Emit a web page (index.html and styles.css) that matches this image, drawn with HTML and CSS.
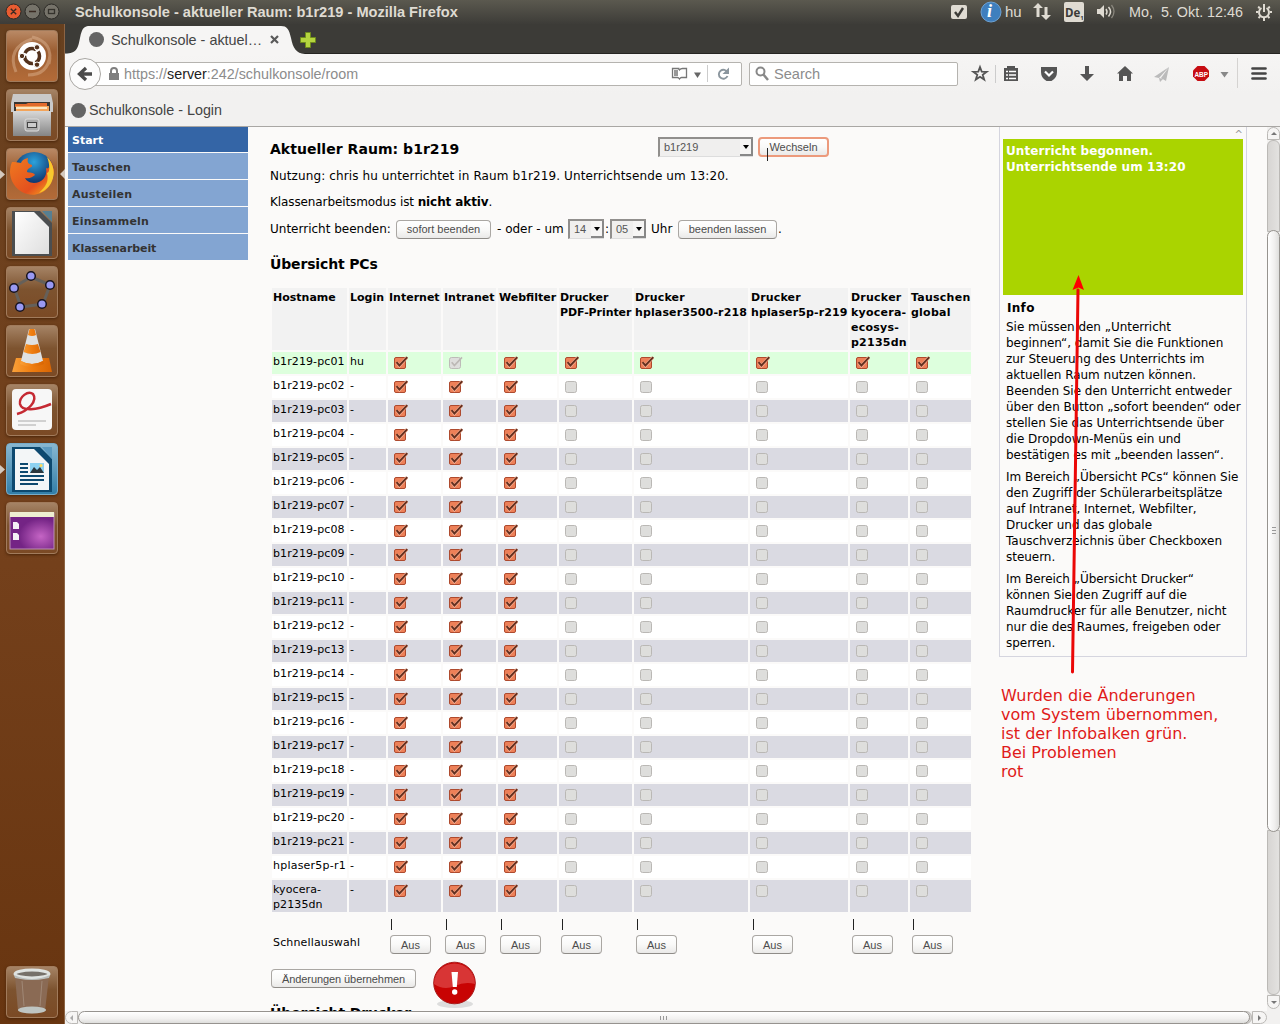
FILE: index.html
```html
<!DOCTYPE html>
<html lang="de">
<head>
<meta charset="utf-8">
<title>Schulkonsole - aktueller Raum: b1r219</title>
<link rel="stylesheet" href="styles.css">
</head>
<body>
<svg class="defs" width="0" height="0">
  <defs>
    <linearGradient id="metal" x2="0" y2="1"><stop stop-color="#d8d8d8"/><stop offset="1" stop-color="#858585"/></linearGradient>
    <linearGradient id="fox" x2="1" y2="1"><stop stop-color="#ef7b20"/><stop offset=".65" stop-color="#e4501e"/><stop offset="1" stop-color="#f8b820"/></linearGradient>
    <radialGradient id="globe" cx=".5" cy=".25"><stop stop-color="#2ca2dc"/><stop offset="1" stop-color="#123a72"/></radialGradient>
    <radialGradient id="desk" cx=".7" cy=".65"><stop stop-color="#c565c5"/><stop offset="1" stop-color="#742485"/></radialGradient>
    <linearGradient id="cone" x2="1"><stop stop-color="#f9a13a"/><stop offset=".5" stop-color="#ef7d10"/><stop offset="1" stop-color="#d76504"/></linearGradient>
    <linearGradient id="paper" x2="1" y2="1"><stop stop-color="#fff"/><stop offset="1" stop-color="#dedede"/></linearGradient>
    <symbol id="on" viewBox="0 0 14 13"><rect x=".5" y="1.5" width="11" height="11" rx="1.5" fill="#ed8058" stroke="#ae4a2e"/><path d="M2.7 6.3 5.4 9.8 13 1.3" fill="none" stroke="#f7b197" stroke-width="3"/><path d="M2.5 6.2 5.4 9.5 13.3 1.2" fill="none" stroke="#65301f" stroke-width="1.9"/></symbol>
    <symbol id="off" viewBox="0 0 14 13"><rect x=".5" y="1.5" width="11" height="11" rx="2" fill="#dededc" stroke="#bab8b5"/></symbol>
    <symbol id="dim" viewBox="0 0 14 13"><rect x=".5" y="1.5" width="11" height="11" rx="2" fill="#dededc" stroke="#bdbbb8"/><path d="M2.7 6.2 5.4 9.5 13 1.3" fill="none" stroke="#bcb8b5" stroke-width="1.7"/></symbol>
  </defs>
</svg>
<header class="panel">
  <svg width="65" height="24"><g stroke="#2c2a26"><circle cx="13.5" cy="11.5" r="7.5" fill="#e85c31"/><circle cx="32.5" cy="11.5" r="7.5" fill="#76736a"/><circle cx="51.5" cy="11.5" r="7.5" fill="#76736a"/></g><path d="m10.8 8.800 5.4 5.4m0-5.4-5.4 5.4M29 11.5h7" stroke="#3a2a22" stroke-width="1.4"/><rect x="48.5" y="9.5" width="6" height="4" fill="none" stroke="#34322c" stroke-width="1.3"/></svg>
  <span class="wintitle">Schulkonsole - aktueller Raum: b1r219 - Mozilla Firefox</span>
  <svg class="tray" width="72" height="24"><rect x="1" y="5" width="16" height="14" rx="2" fill="#dfdbd2"/><path d="m5 12 3 4 5-8" fill="none" stroke="#3c3b37" stroke-width="2.4"/><circle cx="41" cy="12" r="10" fill="#3f7fbe" stroke="#6da2d3"/></svg>
  <i class="infoi">i</i>
  <span class="hu">hu</span>
  <svg class="arrows" width="18" height="18"><path d="M5 0 0 5h3.5v9h3V5H10zM13 17l-5-5h3.5V4h3v8H18z" fill="#dfdbd2"/></svg>
  <span class="kbd">De<small>1</small></span>
  <svg class="vol" width="20" height="16"><path d="M1 5h3l4-4v13l-4-4H1z" fill="#dfdbd2"/><path d="M10 5q2 3 0 5.500M12.500 3q4 4.500 0 9.500" fill="none" stroke="#dfdbd2" stroke-width="1.500"/><path d="M15.500 1q5 6.500 0 13" fill="none" stroke="#89867d" stroke-width="1.300"/></svg>
  <span class="clock">Mo,&nbsp; 5. Okt. 12:46</span>
  <svg class="gear" width="16" height="17" fill="none" stroke="#dfdbd2"><path d="M5.500 4a5 5 0 1 0 5 0" stroke-width="2"/><path d="M8 0v8" stroke-width="2"/><path d="M0 8h2m12 0h2M2 3l2 1m10-1-2 1M2.500 14l1.500-1.500m9.500 1.500L12 12.500M8 14v3" stroke-width="2"/></svg>
</header>
<div class="desktop">
  <nav class="launcher">
    <div class="tile bright"><svg viewBox="0 0 52 52"><path d="M26 7q22 5 17 27M44 25q-2 20-22 20M10 42Q0 18 26 9" stroke="#e0b797" opacity=".45" fill="none" stroke-width="3"/><circle cx="26" cy="26" r="14" fill="#fff"/><circle cx="26" cy="26" r="7.500" fill="none" stroke="#53321d" stroke-width="3.500" stroke-dasharray="13 2.700" stroke-dashoffset="5"/><g fill="#53321d" stroke="#fff"><circle cx="16" cy="26" r="2.700"/><circle cx="31" cy="17.300" r="2.700"/><circle cx="31" cy="34.700" r="2.700"/></g></svg></div>
    <div class="tile"><svg viewBox="0 0 52 52"><path d="M7 5h38l2 9v9H5v-9z" fill="#c9c9c9"/><path d="M8 13h36v14H8z" fill="#393633"/><path d="M9 15h11l2-1h19v4H9z" fill="#e16a2d"/><path d="M10 17h33v8H10z" fill="#f3a45a"/><path d="M10 18h31v2H10z" fill="#fbe6c3"/><path d="M7 22h38v25H7z" fill="url(#metal)"/><rect x="19" y="30" width="14" height="12" rx="2" fill="#aaa" stroke="#ddd"/><rect x="21.500" y="33.500" width="9" height="5" fill="#ccc" stroke="#444"/></svg></div>
    <div class="tile bright"><svg viewBox="0 0 52 52"><circle cx="28" cy="24" r="20" fill="url(#globe)"/><path d="M6 14c-5 12 0 24 10 30 15 8 31-2 32-20 0-7-3-11-6-14 3 7 1 12-2 10 2 9-5 15-12 15-5 0-8-3-9-5 5 1 7-1 10-3-1-3-6-2-8-3 0-5 6-4 5-7-4-1-5-3-4-7-5 1-6 3-7 5l-6-1z" fill="url(#fox)"/><path d="M41 9c6 6 8 14 6 21-2 8-8 13-14 15 7-7 10-11 8-20 3 0 3-9 0-16z" fill="#f8c82e"/></svg></div>
    <div class="tile"><svg viewBox="0 0 52 52"><path d="M6 4h28l12 12v33H6z" fill="#4b4e50"/><path d="M36 4h10v11z" fill="#577f91"/><path d="M9 5h19l15 15v27H9z" fill="url(#paper)"/></svg></div>
    <div class="tile"><svg viewBox="0 0 52 52"><path d="m25 11 19 8-7 19-22 3-7-20z" fill="none" stroke="#65605a" stroke-width="3" stroke-linejoin="round"/><g fill="#9999f2" stroke="#17131e" stroke-width="1.500"><circle cx="25" cy="10" r="4.300"/><circle cx="44" cy="19" r="4.300"/><circle cx="36" cy="38" r="4.300"/><circle cx="14" cy="41" r="4.300"/><circle cx="8" cy="22" r="4.300"/></g></svg></div>
    <div class="tile"><svg viewBox="0 0 52 52"><path d="M10 33h33l3 14H6z" fill="url(#cone)"/><path d="M23 4h6l8 32q-11 6-22 0z" fill="#dfe1e2"/><path d="M23.500 4h5l1.500 6q-4 2-8 0zM20 19q6 2 12 0l2.500 8q-8 4-17 0zM15 36q11 6 22 0l1 3q-12 6-24 0z" fill="url(#cone)"/></svg></div>
    <div class="tile"><svg viewBox="0 0 52 52"><rect x="6" y="5" width="40" height="41" rx="4" fill="#f7f7f7"/><path d="M11 30C22 27 32 17 27 10c-5-4-14 3-13 10 2 8 17 6 31 0" fill="none" stroke="#c52a33" stroke-width="2.500"/><path d="M12 37h28M12 41h18" stroke="#aaa"/></svg></div>
    <div class="tile blue"><svg viewBox="0 0 52 52"><path d="M6 4h28l12 12v33H6z" fill="#0d496f"/><path d="M36 4h10v12z" fill="#5c9ac0"/><path d="M9 6h19l15 15v26H9z" fill="#f3f6f7"/><path d="M14 21h8M14 25h8M14 29h8M14 33h24M14 37h24M14 41h18" stroke="#0d496f" stroke-width="2"/><path d="M24 20h14v10H24z" fill="#8dd2f1"/><path d="m24 30 4-6 3 3 3-3 4 6z" fill="#29373d"/><circle cx="35" cy="22.500" r="1.500" fill="#ffda58"/></svg></div>
    <div class="tile"><svg viewBox="0 0 52 52"><rect x="4" y="11" width="44" height="36" fill="url(#desk)" stroke="#bc91b4"/><path d="M4 10h44v5H4z" fill="#eeeed1"/><path d="M7 20h4l2 2v5H7zM7 31h4l2 2v5H7z" fill="#f5eff5"/></svg></div>
    <div class="tile trash"><svg viewBox="0 0 52 52"><path d="M9 10h34l-4 35q-13 5-27 0z" fill="#8a6a54"/><path d="M16 15l2 25M36 15l-2 25" stroke="#a08876"/><ellipse cx="26" cy="44" rx="14" ry="3.500" fill="#bfc5c2"/><ellipse cx="26" cy="8" rx="17" ry="4" fill="#76716a" stroke="#dfe3e1" stroke-width="3"/><path d="M8 9q18 8 36 0l-1 3q-17 4-34 0z" fill="#b9bdbb"/></svg></div>
    <svg class="marks" width="65" height="500"><path d="M0 146l5 4.500-5 4.500zM0 441l5 4.500-5 4.500zM65 145l-5 5 5 5z" fill="#d4c9bf"/></svg>
  </nav>
  <main class="browser">
    <div class="tabs">
      <svg class="tabshape" width="230" height="30"><path d="M0 30V29.500C12 29.500 13 24 15 14 17 4 19 2 25 2H216C222 2 224 5 226 14 228 24 231 29.500 240 30z" fill="#f6f5f4"/></svg>
      <div class="tab"><i class="dot"></i><span>Schulkonsole - aktuel…</span><svg width="9" height="9"><path d="m1 1 7 7m0-7-7 7" stroke="#5a5a5a" stroke-width="2.200"/></svg></div>
      <svg class="plus" width="16" height="16"><path d="M5.500.5h5v5h5v5h-5v5h-5v-5h-5v-5h5z" fill="#b5d43f" stroke="#6f8b1c"/></svg>
    </div>
    <div class="toolbar">
      <svg class="back" width="32" height="32"><circle cx="16" cy="16" r="15.500" fill="#fcfcfc" stroke="#a8a6a2"/><path d="M23 16H11m6-6-6.500 6 6.500 6" stroke="#4b4b4b" stroke-width="3.300" fill="none"/></svg>
      <div class="url"><svg width="12" height="14"><path d="M1 6h10v7H1z" fill="#7f7f7f"/><path d="M3 7V4q0-3 3-3t3 3v3" fill="none" stroke="#7f7f7f" stroke-width="2"/></svg><span>https://<em>server</em>:242/schulkonsole/room</span>
        <svg class="urlicons" width="70" height="24"><path d="M8.500 6.500h-7v9h5q1 0 2 1.500 1-1.500 2-1.500h5v-9h-4q-2 0-3 1.500-1-1.500-2-1.500M3 9h4M3 11h4M3 13h4" fill="none" stroke="#777" stroke-width="1.300"/><path d="M23 10.500h7L26.500 16z" fill="#666"/><path d="M36.500 3v17" stroke="#ccc"/><path d="M56.500 10.500a4.500 4.500 0 1 0 0 3.500" fill="none" stroke="#8b969e" stroke-width="1.900"/><path d="M58 5.500v6.500h-6.500z" fill="#8b969e"/></svg></div>
      <div class="search"><svg width="14" height="16"><circle cx="5.500" cy="5.500" r="4" fill="none" stroke="#888" stroke-width="2"/><path d="m8 8 5 6" stroke="#888" stroke-width="2.500"/></svg><span>Search</span></div>
      <svg class="tools" width="318" height="40"><g fill="#555"><path d="m18 13 1.700 4.600 5 .2-4 3 1.500 4.800-4.200-2.800-4.200 2.800 1.500-4.800-4-3 5-.2z" fill="none" stroke="#555" stroke-width="1.800"/><path d="M33.500 11v18" stroke="#ccc"/><path d="M42 14h3v-2h8v2h3v13H42z"/><path d="M44 17.500h2m1 0h7m-10 3.500h2m1 0h7m-10 3.500h2m1 0h7" stroke="#fff" stroke-width="1.600"/><path d="M79 13h16v5q0 6-5.500 9h-5q-5.500-3-5.500-9z"/><path d="m83 17.500 4 4 4-4" stroke="#fff" stroke-width="2.200" fill="none"/><path d="M123 12h4v8h5l-7 7-7-7h5z"/><path d="m163 12 8 7.500h-2V27h-4v-5h-4v5h-4v-7.500h-2z"/><path d="m207 13-15 10 5 1zM207 13l-3 14-5-3zM197 24l1 4 3-3z" fill="#bbb"/><path d="M235.500 12h7l4.500 4.500v6l-4.500 4.500h-7l-4.500-4.500v-6z" fill="#c70d12"/><path d="M258.500 18h8l-4 5.500z" fill="#888"/><path d="M275.500 4v30" stroke="#d5d3d1"/><path d="M290.500 14.500h13m-13 5h13m-13 5h13" stroke="#444" stroke-width="2.700" stroke-linecap="round"/></g><text x="232.500" y="22.500" fill="#fff" font-family="Liberation Sans" font-weight="bold" font-size="8" textLength="13.500" lengthAdjust="spacingAndGlyphs">ABP</text></svg>
    </div>
    <div class="bookmarks"><i class="dot"></i><span>Schulkonsole - Login</span></div>
    <div class="view">
      <section class="page">
        <ul class="menu"><li class="active">Start</li><li>Tauschen</li><li>Austeilen</li><li>Einsammeln</li><li class="exam">Klassenarbeit</li></ul>
        <article class="content">
          <div class="headline"><h2>Aktueller Raum: b1r219</h2><span class="select room">b1r219<i></i></span><button class="hot">Wechseln</button></div>
          <p class="usage">Nutzung: chris hu unterrichtet in Raum b1r219. Unterrichtsende um 13:20.</p>
          <p class="mode">Klassenarbeitsmodus ist <b>nicht aktiv</b>.</p>
          <div class="ending"><span class="w121">Unterricht beenden:</span><button class="w95">sofort beenden</button><span class="or">- oder - um</span><span class="select num">14<i></i></span><span class="colon">:</span><span class="select num">05<i></i></span><span class="uhr">Uhr</span><button class="w99">beenden lassen</button><span class="stop">.</span></div>
          <h2 class="pcs">Übersicht PCs</h2>
          <table>
            <colgroup><col class="c1"><col class="c2"><col class="c3"><col class="c3"><col class="c5"><col class="c6"><col class="c7"><col class="c8"><col class="c9"><col class="c10"></colgroup>
            <thead><tr><th>Hostname<th>Login<th>Internet<th>Intranet<th>Webfilter<th>Drucker<br>PDF-Printer<th>Drucker<br>hplaser3500-r218<th>Drucker<br>hplaser5p-r219<th>Drucker<br>kyocera-<br>ecosys-<br>p2135dn<th>Tauschen<br>global</tr></thead>
            <tbody id="hosts"></tbody>
            <tfoot><tr id="quick"><td colspan="2" class="ql">Schnellauswahl</td></tr></tfoot>
          </table>
          <div class="apply"><button class="w145">Änderungen übernehmen</button><svg width="46" height="48"><ellipse cx="23" cy="43" rx="18" ry="4" fill="#ddd"/><circle cx="22.500" cy="22" r="20.800" fill="#c80303" stroke="#a91c1c"/><path d="M2 23a20.500 20.500 0 1 1 41 0Q33 20 23 25 12 30 2 23z" fill="#d83535"/><path d="M19.500 11h6.500l-1.200 15h-4z" fill="#fff"/><circle cx="22.700" cy="31" r="2.700" fill="#fff"/></svg></div>
          <h2 class="printers">Übersicht Drucker</h2>
        </article>
        <aside>
          <div class="collapse">^</div>
          <div class="status">Unterricht begonnen.<br>Unterrichtsende um 13:20</div>
          <h3>Info</h3>
          <p>Sie müssen den „Unterricht<br>beginnen“, damit Sie die Funktionen<br>zur Steuerung des Unterrichts im<br>aktuellen Raum nutzen können.<br>Beenden Sie den Unterricht entweder<br>über den Button „sofort beenden“ oder<br>stellen Sie das Unterrichtsende über<br>die Dropdown-Menüs ein und<br>bestätigen es mit „beenden lassen“.</p>
          <p>Im Bereich „Übersicht PCs“ können Sie<br>den Zugriff der Schülerarbeitsplätze<br>auf Intranet, Internet, Webfilter,<br>Drucker und das globale<br>Tauschverzeichnis über Checkboxen<br>steuern.</p>
          <p>Im Bereich „Übersicht Drucker“<br>können Sie den Zugriff auf die<br>Raumdrucker für alle Benutzer, nicht<br>nur die des Raumes, freigeben oder<br>sperren.</p>
        </aside>
      </section>
      <div class="vbar"><i class="btn up"></i><i class="trough t1"></i><i class="thumb"><s></s></i><i class="trough t2"></i><i class="btn down"></i></div>
    </div>
    <div class="hbar"><i class="btn left"></i><i class="thumb"><s></s></i><i class="end"></i><i class="btn right"></i></div>
  </main>
</div>
<svg class="pointer" width="20" height="404"><path d="M3.500 400 9 18" stroke="#eb0707" stroke-width="3" stroke-linecap="round"/><path d="M9.500 3 15 18l-5.500-2.500L3.500 18z" fill="#f00"/></svg>
<p class="note">Wurden die Änderungen<br>vom System übernommen,<br>ist der Infobalken grün.<br>Bei Problemen<br>rot</p>
<i class="caret"></i>
<script src="hosts.js"></script>
</body>
</html>
```
FILE: styles.css
```css
* { box-sizing: border-box; }
body { margin: 0; width: 1280px; height: 1024px; overflow: hidden; font: 12px/16px "DejaVu Sans", sans-serif; color: #000; display: flex; flex-direction: column; background: #fbfaf9; }
i, em { font-style: normal; }
svg { display: block; flex: none; }
.defs { position: absolute; }
.panel { height: 24px; flex: none; display: flex; align-items: center; background: linear-gradient(#5b594f, #3d3c38); color: #dfdbd2; font: 15px/24px "Liberation Sans", sans-serif; position: relative; white-space: nowrap; }
.wintitle { margin-left: 10px; font-weight: bold; width: 875px; font-size: 14.6px; }
.infoi { position: absolute; left: 987px; top: 0; font: italic bold 18px/23px "Liberation Serif", serif; color: #fff; }
.hu { margin-left: -17px; width: 28px; }
.kbd { margin-left: 13px; width: 20px; height: 20px; background: #dfdbd2; color: #3c3b37; border-radius: 2px; font: bold 11.5px/21px "Open Sans", sans-serif; padding-left: 1px; }
.kbd small { font-size: 6px; vertical-align: -3px; line-height: 1px; }
.vol { margin-left: 12px; }
.clock { margin-left: 13px; width: 126px; font-size: 14.35px; }
.gear { margin-left: 1px; }
.desktop { display: flex; height: 1000px; }
.launcher { width: 65px; flex: none; background: linear-gradient(#67401f, #75411c 50%, #683510); display: flex; flex-direction: column; gap: 7px; padding: 6px; position: relative; border-right: 1px solid #8c6444; }
.tile { width: 52px; height: 52px; flex: none; border-radius: 4px; border: 1px solid #a17b5c; background: linear-gradient(#a58365, #7d532f 45%, #7b4a25); box-shadow: 0 1px 3px #4a2509; }
.tile svg { width: 52px; height: 52px; margin: -1px; }
.bright { background: linear-gradient(#b98965, #9c5e32 40%, #b36b38); }
.blue { background: linear-gradient(#88b7d1, #327fa9); border-color: #77abc8; }
.trash { margin-top: auto; }
.marks { position: absolute; left: 0; top: 0; }
.browser { flex: 1; min-width: 0; display: flex; flex-direction: column; background: #f2f1f0; }
.tabs { height: 30px; background: #3c3b37; border-bottom: 1px solid #262522; position: relative; display: flex; align-items: center; }
.tabshape { position: absolute; left: 0; top: 0; overflow: visible; }
.dot { width: 15px; height: 15px; border-radius: 50%; background: #646464; flex: none; }
.tab { position: relative; display: flex; align-items: center; padding-left: 24px; width: 235px; font: 14.4px/20px "Liberation Sans", sans-serif; color: #444; padding-top: 2px; }
.tab span { margin-left: 7px; width: 159px; white-space: nowrap; }
.plus { margin-top: 2px; }
.toolbar { height: 40px; display: flex; align-items: center; background: linear-gradient(#f6f5f4, #f2f1f0); padding-left: 4px; font: 14.6px/22px "Liberation Sans", sans-serif; color: #8c8c8c; }
.back { z-index: 1; }
.url { width: 653px; height: 24px; margin-left: -12px; border: 1px solid #b5b3af; border-radius: 2px; background: #fff; display: flex; align-items: center; padding-left: 18px; font-size: 14.33px; }
.url span { margin-left: 4px; flex: 1; }
.url em { color: #222; }
.search { width: 209px; height: 24px; margin-left: 7px; border: 1px solid #b5b3af; border-radius: 2px; background: #fff; display: flex; align-items: center; padding-left: 5px; gap: 5px; }
.tools { margin-left: 4px; }
.bookmarks { height: 33px; border-bottom: 1px solid #a9a7a4; display: flex; align-items: center; gap: 3px; padding-left: 6px; font: 14.33px/20px "Liberation Sans", sans-serif; color: #444; }
.view { height: 884px; display: flex; }
.page { width: 1202px; flex: none; background: #fbfaf9; display: flex; overflow: hidden; padding-left: 3px; }
.menu { list-style: none; margin: 0; padding: 0; width: 180px; flex: none; display: flex; flex-direction: column; gap: 1px; font-weight: bold; font-size: 11px; line-height: 29px; color: #333; letter-spacing: .2px; }
.menu li { height: 26px; flex: none; background: #83a5d2; padding-left: 4px; }
.menu .active { height: 25px; background: #3465a6; color: #fff; line-height: 28px; letter-spacing: 0; }
.menu .exam { letter-spacing: -.08px; }
.content { width: 751px; padding: 10px 0 0 22px; flex: none; }
h2 { margin: 0; font-size: 14px; line-height: 24px; white-space: nowrap; }
.headline { display: flex; height: 24px; }
.headline h2 { width: 388px; letter-spacing: .04px; }
.select { display: inline-flex; justify-content: space-between; height: 20px; border: 2px solid #918f8d; border-right: 0; border-bottom: 1px solid #ddd; background: #f0efee; font: 11px/17px "Liberation Sans", sans-serif; color: #555; padding-left: 4px; }
.select i { width: 13px; height: 17px; background: #f6f5f4; border-right: 2px solid #888; border-bottom: 2px solid #888; display: flex; align-items: center; justify-content: center; }
.select i::after { content: ""; border: 3.500px solid transparent; border-top: 4px solid #000; border-bottom: 0; }
.room { width: 95px; }
.num { width: 36px; }
button { height: 19px; padding: 0; border: 1px solid #aaa7a3; border-bottom-color: #8f8c88; border-radius: 4px; background: linear-gradient(#fff, #f9f9f8 50%, #eae9e8); color: #4c4c4c; font: 11px/16px "Liberation Sans", sans-serif; }
.hot { width: 71px; height: 20px; margin-left: 5px; border: 2px solid #ec9a7c; }
.usage, .mode { margin: 0; white-space: nowrap; }
.usage { margin-top: 7px; letter-spacing: .11px; }
.mode { margin-top: 10px; letter-spacing: -.1px; }
.ending { display: flex; height: 20px; margin-top: 9px; line-height: 19px; white-space: nowrap; align-items: center; }
.w121 { width: 126px; }
.w95 { width: 95px; }
.or { margin-left: 6px; width: 71px; }
.colon { width: 6px; padding-left: 1px; }
.uhr { width: 32px; padding-left: 5px; }
.w99 { width: 99px; }
.stop { margin-left: 1px; }
.pcs { margin-top: 13px; letter-spacing: -.15px; }
table { table-layout: fixed; width: 703px; border-spacing: 2px; margin-top: 10px; font-size: 11px; line-height: 15px; }
th, td { padding: 2px 0 0 1px; text-align: left; vertical-align: top; }
th { background: #f2f2f2; height: 62px; white-space: nowrap; }
th:nth-child(6) { letter-spacing: -.08px; }
th:nth-child(n+7) { letter-spacing: .13px; }
th:nth-child(n+9) { letter-spacing: .24px; }
tbody td { height: 22px; background: #fff; white-space: nowrap; letter-spacing: .1px; }
tbody tr:nth-child(odd) td { background: #dadae2; }
tbody tr:first-child td { background: #ddffdd; }
tbody tr:nth-child(22) td { letter-spacing: .22px; }
tbody svg { width: 14px; height: 13px; margin: 2px 0 0 5px; }
.c1 { width: 75px; } .c2 { width: 37px; } .c3 { width: 53px; } .c5 { width: 59px; } .c6 { width: 73px; } .c7 { width: 114px; } .c8 { width: 98px; } .c9 { width: 58px; } .c10 { width: 61px; }
tfoot td { height: 41px; padding: 2px 0 0 2px; }
tfoot .ql { vertical-align: bottom; padding: 0 0 5px 1px; letter-spacing: .15px; }
.bar { display: block; width: 1px; height: 11px; margin: 3px 0 0 1px; background: #222; overflow: hidden; color: transparent; }
tfoot button { display: block; width: 41px; margin-top: 5px; }
.apply { display: flex; padding-left: 1px; height: 48px; margin-top: 4px; gap: 16px; }
.w145 { width: 145px; margin-top: 8px; letter-spacing: -.08px; }
.printers { margin-top: -6px; line-height: 20px; letter-spacing: -.1px; }
aside { width: 248px; flex: none; height: 530px; border: 1px solid #d5d5df; border-top: 0; padding: 0 3px; }
.collapse { height: 12px; text-align: right; font-size: 10px; line-height: 16px; color: #999; }
.status { height: 156px; background: #aad400; color: #fff; font-weight: bold; padding: 4px 3px; letter-spacing: .08px; }
h3 { font-size: 12px; line-height: 16px; margin: 5px 0 3px 4px; letter-spacing: .3px; }
aside p { margin: 0 0 6px 3px; white-space: nowrap; letter-spacing: -.03px; }
.vbar { width: 13px; display: flex; flex-direction: column; }
.btn { flex: none; background: #f6f5f4; border: 1px solid #bbb9b6; display: flex; align-items: center; justify-content: center; }
.up, .down { height: 13px; }
.up { border-radius: 7px 7px 0 0; }
.down { border-radius: 0 0 7px 7px; height: 14px; margin-bottom: 2px; }
.up::after, .down::after { content: ""; border: 3px solid transparent; border-bottom: 3px solid #777; border-top: 0; }
.down::after { border-bottom: 0; border-top: 3px solid #777; }
.trough { background: linear-gradient(90deg, #d7d5d3, #e3e2e0); border: 1px solid #bbb9b6; }
.t1 { height: 92px; margin-bottom: -2px; border-radius: 6px 6px 0 0; }
.t2 { flex: 1; margin-top: -2px; border-radius: 0 0 6px 6px; }
.thumb { border: 1px solid #96938f; background: linear-gradient(90deg, #fff, #f0efee 60%, #dededc); border-radius: 7px; display: flex; align-items: center; justify-content: center; z-index: 1; }
.vbar .thumb { height: 602px; }
.vbar s { width: 4px; height: 8px; background: repeating-linear-gradient(#999 0 1px, transparent 1px 3px); }
.hbar { height: 13px; display: flex; width: 1202px; }
.left, .right { width: 13px; }
.left { border-radius: 7px 0 0 7px; }
.right { border-radius: 0 7px 7px 0; width: 15px; }
.left::after, .right::after { content: ""; border: 3px solid transparent; border-right: 3px solid #aaa; border-left: 0; }
.right::after { border-right: 0; border-left: 3px solid #777; }
.hbar .thumb { width: 1172px; background: linear-gradient(#fff, #f2f1f0 60%, #dededc); }
.hbar s { width: 8px; height: 4px; background: repeating-linear-gradient(90deg, #999 0 1px, transparent 1px 3px); }
.end { flex: 1; margin-left: -6px; border: 1px solid #bbb9b6; background: #d9d7d5; border-radius: 0 6px 6px 0; }
.pointer { position: absolute; left: 1069px; top: 272px; }
.note { position: absolute; left: 1001px; top: 686px; margin: 0; font-size: 16px; line-height: 19px; color: #e01a1a; white-space: nowrap; }
.caret { position: absolute; left: 767px; top: 148px; width: 1px; height: 13px; background: #222; }
```
FILE: hosts.js
```js
const icon = name => `<td><svg><use href="#${name}"/></svg></td>`;
const hosts = [];
for (let n = 1; n <= 21; n++) hosts.push('b1r219-pc' + String(n).padStart(2, '0'));
hosts.push('hplaser5p-r1', 'kyocera-<br>p2135dn');

document.getElementById('hosts').innerHTML = hosts.map((host, row) => {
  const first = row === 0;
  const states = ['on', first ? 'dim' : 'on', 'on', ...Array(5).fill(first ? 'on' : 'off')];
  return `<tr><td>${host}</td><td>${first ? 'hu' : '-'}</td>${states.map(icon).join('')}</tr>`;
}).join('');

document.getElementById('quick').insertAdjacentHTML('beforeend', '<td><i class="bar"></i><button>Aus</button></td>'.repeat(8));
```
